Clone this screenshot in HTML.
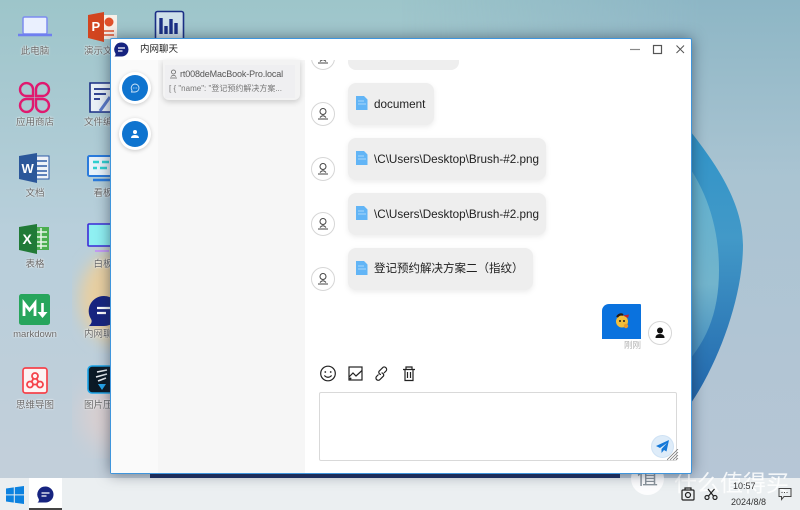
<!DOCTYPE html>
<html lang="zh"><head><meta charset="utf-8"><title>内网聊天</title>
<style>
*{box-sizing:border-box;margin:0;padding:0}
html,body{width:800px;height:510px;overflow:hidden}
body{position:relative;font-family:"Liberation Sans","Noto Sans CJK SC",sans-serif;background:#a9c3cf}
.abs,.lb,.av,.bub,.bub span,.fi{position:absolute}
svg{position:absolute;display:block}
.lb{width:70px;text-align:center;font-size:9.5px;line-height:12px;color:#666;text-shadow:0 0 2px #fff,0 0 1px #fff;white-space:nowrap}
.win{position:absolute;left:110px;top:38px;width:582px;height:436px;background:#fff;border:1px solid #3f95dc;box-shadow:0 0 14px rgba(30,40,60,.55);overflow:hidden;border-radius:2px}
.av{left:311px;width:24px;height:24px;border:1px solid #d6d6d6;border-radius:50%;background:#fff;overflow:hidden}
.bub{left:348px;background:#eeeeee;border-radius:8px;box-shadow:0 2px 6px rgba(0,0,0,.08);height:42px}
.bub span{left:26px;top:13.5px;font-size:11.7px;line-height:15px;color:#222;white-space:nowrap}
.fi{left:8px;top:13px}
.sb{left:119px;width:32px;height:32px;border-radius:50%;background:#fff;box-shadow:0 1px 4px rgba(0,0,0,.2)}
.sb i{position:absolute;left:3px;top:3px;width:26px;height:26px;border-radius:50%;background:#0f74cf}
</style></head><body>
<svg style="left:0;top:0" width="800" height="510" viewBox="0 0 800 510">
<defs>
<linearGradient id="bg" x1="0" y1="0" x2="0" y2="1"><stop offset="0" stop-color="#9dc5ca"/><stop offset=".45" stop-color="#b8cfdb"/><stop offset="1" stop-color="#c4cfda"/></linearGradient>
<linearGradient id="rt" x1="0" y1="0" x2="0" y2="1"><stop offset="0" stop-color="#8db6c5"/><stop offset=".35" stop-color="#aac4d2"/><stop offset="1" stop-color="#b8c6d6"/></linearGradient>
<linearGradient id="fd" x1="0" y1="0" x2="1" y2="0"><stop offset="0" stop-color="#fff" stop-opacity="0"/><stop offset="1" stop-color="#fff"/></linearGradient>
<mask id="m"><rect x="400" width="300" height="510" fill="url(#fd)"/><rect x="700" width="100" height="510" fill="#fff"/></mask>
<linearGradient id="o" x1="0" y1="0" x2="0" y2="1"><stop offset="0" stop-color="#2e93c8"/><stop offset=".4" stop-color="#4299c8"/><stop offset="1" stop-color="#1f62aa"/></linearGradient>
<linearGradient id="i" x1="0" y1="0" x2="0" y2="1"><stop offset="0" stop-color="#5fb0cf"/><stop offset=".6" stop-color="#72b4cc"/><stop offset="1" stop-color="#3d88bd"/></linearGradient>
<filter id="b"><feGaussianBlur stdDeviation="8"/></filter>
<filter id="b2"><feGaussianBlur stdDeviation="12"/></filter>
</defs>
<rect width="800" height="510" fill="url(#bg)"/>
<rect width="800" height="510" fill="url(#rt)" mask="url(#m)"/>
<ellipse cx="118" cy="298" rx="38" ry="46" fill="#e8cfa0" filter="url(#b)"/>
<ellipse cx="120" cy="415" rx="40" ry="36" fill="#e6cfcb" fill-opacity=".65" filter="url(#b2)"/>
<path d="M680 118C705 150 743 195 743 245C743 300 715 375 680 418Z" fill="url(#o)"/>
<path d="M680 155C705 185 719 225 719 270C719 315 705 345 680 370Z" fill="url(#i)"/>
<rect x="150" y="472" width="470" height="7" fill="#1d2f63"/>
</svg>

<!-- desktop icons -->
<svg style="left:17px;top:15px" width="36" height="24" viewBox="0 0 36 24"><rect x="6" y="2" width="24" height="17" rx="1.5" fill="#eaf0fe" stroke="#7d8cf0" stroke-width="1.5"/><path d="M1 20H35" stroke="#6f7ff0" stroke-width="2.5"/></svg>
<div class="lb" style="left:0;top:46px">此电脑</div>
<svg style="left:87px;top:11px" width="31" height="31" viewBox="0 0 31 31"><rect x="13" y="4" width="17" height="24" fill="#f7efe8"/><circle cx="22" cy="11" r="4.5" fill="#e0502a"/><path d="M17 20H27M17 24H27" stroke="#e0502a" stroke-width="1.6"/><path d="M1 4L17 1V31L1 27Z" fill="#d2451f"/><text x="4.5" y="20" font-size="13" font-weight="700" fill="#fff" font-family="Liberation Sans">P</text></svg>
<div class="lb" style="left:68px;top:46px">演示文稿</div>
<svg style="left:154px;top:10px" width="32" height="28" viewBox="0 0 32 28"><rect x="1.5" y="1.5" width="28" height="30" rx="2" fill="#cfe0ea" stroke="#1b2f86" stroke-width="1.6"/><path d="M7 8V24M12 16V24M17 9V24M22 13V24" stroke="#1b2f86" stroke-width="3.4"/></svg>
<svg style="left:18px;top:81px" width="33" height="33" viewBox="0 0 33 33" fill="none" stroke="#e0196f" stroke-width="2.4"><path d="M15 15H8A6.5 6.5 0 1 1 15 8Z"/><path d="M18 15H25A6.5 6.5 0 1 0 18 8Z"/><path d="M15 18H8A6.5 6.5 0 1 0 15 25Z"/><path d="M18 18H25A6.5 6.5 0 1 1 18 25Z"/></svg>
<div class="lb" style="left:0;top:117px">应用商店</div>
<svg style="left:88px;top:81px" width="24" height="33" viewBox="0 0 24 33"><path d="M2 2H24V31H2Z" fill="#e9f0f6" stroke="#1b2f86" stroke-width="1.6"/><path d="M6 8H22M6 13H18M6 18H12" stroke="#1b2f86" stroke-width="1.8"/><path d="M12 30L22 16" stroke="#5a79c8" stroke-width="3"/></svg>
<div class="lb" style="left:68px;top:117px">文件编辑</div>
<svg style="left:18px;top:152px" width="33" height="31" viewBox="0 0 33 31"><rect x="14" y="4" width="17" height="23" fill="#eef2f8" stroke="#2d5aa6"/><path d="M18 9H29M18 14H29M18 19H29M18 23H29" stroke="#2d5aa6" stroke-width="1.5"/><path d="M1 4L19 1V31L1 27Z" fill="#2b579a"/><text x="3.5" y="21" font-size="13" font-weight="700" fill="#fff" font-family="Liberation Sans">W</text></svg>
<div class="lb" style="left:0;top:188px">文档</div>
<svg style="left:87px;top:155px" width="24" height="30" viewBox="0 0 24 30"><rect x="1" y="1" width="30" height="20" rx="1.5" fill="#e8f2fa" stroke="#2a7bdc" stroke-width="2"/><path d="M6 7H12M15 7H22M6 13H10M13 13H20" stroke="#2fd0d0" stroke-width="2.4"/><path d="M6 25H24" stroke="#2a7bdc" stroke-width="2.4"/></svg>
<div class="lb" style="left:68px;top:188px">看板</div>
<svg style="left:18px;top:223px" width="33" height="31" viewBox="0 0 33 31"><rect x="14" y="4" width="17" height="23" fill="#4caf50"/><path d="M19 9H29M19 14H29M19 19H29M19 23H29M23 5V26" stroke="#e9f6ea" stroke-width="1.5"/><path d="M1 4L19 1V31L1 27Z" fill="#217a37"/><text x="4.5" y="21" font-size="14" font-weight="700" fill="#fff" font-family="Liberation Sans">X</text></svg>
<div class="lb" style="left:0;top:259px">表格</div>
<svg style="left:87px;top:223px" width="23" height="30" viewBox="0 0 23 30"><rect x="1" y="1" width="30" height="22" rx="1" fill="#8ff0f2" stroke="#3b2ad8" stroke-width="1.6"/><path d="M8 28H22" stroke="#c29cf2" stroke-width="2"/></svg>
<div class="lb" style="left:68px;top:259px">白板</div>
<svg style="left:19px;top:294px" width="31" height="31" viewBox="0 0 31 31"><rect width="31" height="31" rx="2.5" fill="#27a55c"/><path d="M5 22V9L10.5 16L16 9V22" fill="none" stroke="#fff" stroke-width="2.8"/><path d="M23.5 9V20" stroke="#fff" stroke-width="2.6"/><path d="M18.5 18H28.5L23.5 24Z" fill="#fff"/></svg>
<div class="lb" style="left:0;top:329px">markdown</div>
<svg style="left:88px;top:295px" width="22" height="33" viewBox="0 0 22 33"><path d="M16 1A15 15 0 0 1 16 31H1Q5 27 3 24A15 15 0 0 1 16 1Z" fill="#172480"/><path d="M9 13H22M9 18H18" stroke="#fff" stroke-width="2.2"/></svg>
<div class="lb" style="left:68px;top:329px">内网聊天</div>
<svg style="left:22px;top:367px" width="26" height="27" viewBox="0 0 26 27" fill="none"><rect x="1" y="1" width="24" height="25" rx="2.5" fill="#fdf3f3" stroke="#f5434b" stroke-width="1.7"/><g stroke="#f5434b" stroke-width="1.8"><circle cx="13" cy="9" r="3"/><circle cx="8" cy="17.5" r="3"/><circle cx="18" cy="17.5" r="3"/><path d="M11.5 11.5L9.5 15M14.5 11.5L16.5 15M11 17.5H15"/></g></svg>
<div class="lb" style="left:0;top:400px">思维导图</div>
<svg style="left:87px;top:365px" width="24" height="30" viewBox="0 0 24 30"><rect x="1" y="1" width="30" height="27" rx="4" fill="#0b1a26" stroke="#1aa4e8" stroke-width="1.6"/><path d="M10 7L20 5M9 12L20 9M11 16L19 13" stroke="#e8eef2" stroke-width="1.6"/><path d="M11 19H19L15 25Z" fill="#26a7ee"/></svg>
<div class="lb" style="left:68px;top:400px">图片压缩</div>

<!-- taskbar -->
<div class="abs" style="left:0;top:478px;width:800px;height:32px;background:#ebeff1"></div>
<svg style="left:6px;top:486px" width="18" height="18" viewBox="0 0 18 18" fill="#0c82e0"><path d="M0 2.5L7.8 1.4V8.4H0ZM8.8 1.2L18 0V8.4H8.8ZM0 9.4H7.8V16.6L0 15.5ZM8.8 9.4H18V18L8.8 16.8Z"/></svg>
<div class="abs" style="left:29px;top:478px;width:33px;height:32px;background:#fff"></div>
<div class="abs" style="left:29px;top:508px;width:33px;height:2px;background:#444"></div>
<svg style="left:37px;top:486px" width="17" height="17" viewBox="0 0 17 17"><path d="M8.5 0.5A8 8 0 0 1 8.5 16.5H0.5Q2.5 15 1.7 13A8 8 0 0 1 8.5 0.5Z" fill="#172480"/><path d="M4.5 7H12.5M4.5 10H9.5" stroke="#fff" stroke-width="1.3"/></svg>

<!-- watermark -->
<div class="abs" style="left:631px;top:462px;width:33px;height:33px;border-radius:50%;background:rgba(255,255,255,.88);color:#8b949c;font-size:21px;line-height:31px;text-align:center">值</div>
<div class="abs" style="left:674px;top:468px;font-size:23px;line-height:30px;color:rgba(255,255,255,.85);white-space:nowrap">什么值得买</div>

<!-- window -->
<div class="win"></div>
<div class="abs" style="left:111px;top:60px;width:47px;height:413px;background:#fafafa"></div>
<div class="abs" style="left:158px;top:60px;width:147px;height:413px;background:#f6f6f6"></div>
<svg style="left:114px;top:42px" width="15" height="15" viewBox="0 0 15 15"><path d="M7.5 0.5A7 7 0 0 1 7.5 14.5H0.5Q2 13 1.5 11.5A7 7 0 0 1 7.5 0.5Z" fill="#172480"/><path d="M4 6H11M4 9H8.5" stroke="#fff" stroke-width="1.2"/></svg>
<div class="abs" style="left:140px;top:43px;font-size:9.5px;line-height:13px;color:#222">内网聊天</div>
<svg style="left:628px;top:43px" width="60" height="12" viewBox="0 0 60 12" fill="none" stroke="#555"><path d="M2 6.5H12" stroke="#888" stroke-width="1.2"/><rect x="25.5" y="2.5" width="8" height="8" stroke-width="1.2"/><path d="M48.5 2.5L56 10M56 2.5L48.5 10" stroke-width="1"/></svg>

<!-- sidebar buttons -->
<div class="abs sb" style="top:72px"><i></i></div>
<svg style="left:130px;top:83px" width="10" height="10" viewBox="0 0 10 10" fill="none"><path d="M5 1A4 4 0 0 1 5 9H1.5L2 7.3A4 4 0 0 1 5 1Z" stroke="#cfe5f8" stroke-width=".9"/><circle cx="3.3" cy="5" r=".5" fill="#cfe5f8"/><circle cx="5" cy="5" r=".5" fill="#cfe5f8"/><circle cx="6.7" cy="5" r=".5" fill="#cfe5f8"/></svg>
<div class="abs sb" style="top:118px"><i></i></div>
<svg style="left:130px;top:129px" width="10" height="10" viewBox="0 0 10 10" fill="#fff"><circle cx="5" cy="3" r="2"/><path d="M1 9Q1 6 5 6Q9 6 9 9Z"/></svg>

<!-- list -->
<div class="abs" style="left:163px;top:60px;width:137px;height:40px;background:#f3f3f3;border-radius:0 0 6px 6px;box-shadow:0 2px 6px rgba(0,0,0,.18)"></div>
<div class="abs" style="left:165px;top:65px;width:130px;height:33px;background:#efeff1"></div>
<svg style="left:169px;top:69px" width="9" height="10" viewBox="0 0 9 10" fill="none" stroke="#666" stroke-width=".8"><circle cx="4.5" cy="3" r="2"/><path d="M1 9H8M2 7.5Q4.5 5 7 7.5"/></svg>
<div class="abs" style="left:180px;top:68px;font-size:9px;letter-spacing:-.13px;line-height:13px;color:#555;white-space:nowrap">rt008deMacBook-Pro.local</div>
<div class="abs" style="left:169px;top:83px;font-size:8px;line-height:11px;color:#777;white-space:nowrap">[ { "name": "登记预约解决方案...</div>

<!-- messages -->
<div class="abs" style="left:306px;top:60px;width:380px;height:11px;overflow:hidden">
 <div class="av" style="left:5px;top:-14px;width:24px;height:24px"><svg style="left:5px;top:4px" width="12" height="14" viewBox="0 0 12 14" fill="none" stroke="#444"><circle cx="6" cy="4.5" r="3"/><path d="M1 12H11M3 10.5Q6 7 9 10.5"/></svg></div>
 <div class="abs" style="left:42px;top:-30px;width:111px;height:40px;background:#eee;border-radius:8px"></div>
</div>
<div class="av" style="top:102px"><svg style="left:5px;top:4px" width="12" height="14" viewBox="0 0 12 14" fill="none" stroke="#444"><circle cx="6" cy="4.5" r="3"/><path d="M1 12H11M3 10.5Q6 7 9 10.5"/></svg></div>
<div class="av" style="top:157px"><svg style="left:5px;top:4px" width="12" height="14" viewBox="0 0 12 14" fill="none" stroke="#444"><circle cx="6" cy="4.5" r="3"/><path d="M1 12H11M3 10.5Q6 7 9 10.5"/></svg></div>
<div class="av" style="top:212px"><svg style="left:5px;top:4px" width="12" height="14" viewBox="0 0 12 14" fill="none" stroke="#444"><circle cx="6" cy="4.5" r="3"/><path d="M1 12H11M3 10.5Q6 7 9 10.5"/></svg></div>
<div class="av" style="top:267px"><svg style="left:5px;top:4px" width="12" height="14" viewBox="0 0 12 14" fill="none" stroke="#444"><circle cx="6" cy="4.5" r="3"/><path d="M1 12H11M3 10.5Q6 7 9 10.5"/></svg></div>

<div class="bub" style="top:83px;width:86px"><svg class="fi" width="12" height="14" viewBox="0 0 12 14"><path d="M0 0H8L11.5 3.5V14H0Z" fill="#62b5f6"/><path d="M2 5H8M2 8H10" stroke="#a8d6fa"/></svg><span>document</span></div>
<div class="bub" style="top:138px;width:198px"><svg class="fi" width="12" height="14" viewBox="0 0 12 14"><path d="M0 0H8L11.5 3.5V14H0Z" fill="#62b5f6"/><path d="M2 5H8M2 8H10" stroke="#a8d6fa"/></svg><span>\C\Users\Desktop\Brush-#2.png</span></div>
<div class="bub" style="top:193px;width:198px"><svg class="fi" width="12" height="14" viewBox="0 0 12 14"><path d="M0 0H8L11.5 3.5V14H0Z" fill="#62b5f6"/><path d="M2 5H8M2 8H10" stroke="#a8d6fa"/></svg><span>\C\Users\Desktop\Brush-#2.png</span></div>
<div class="bub" style="top:248px;width:185px"><svg class="fi" width="12" height="14" viewBox="0 0 12 14"><path d="M0 0H8L11.5 3.5V14H0Z" fill="#62b5f6"/><path d="M2 5H8M2 8H10" stroke="#a8d6fa"/></svg><span style="font-size:11.5px">登记预约解决方案二（指纹）</span></div>

<!-- self message -->
<div class="abs" style="left:602px;top:304px;width:39px;height:35px;background:#0a72de;border-radius:7px 1px 0 0"></div>
<svg style="left:614px;top:312px" width="17" height="17" viewBox="0 0 17 17"><circle cx="8" cy="9.5" r="6" fill="#f3bf3a"/><path d="M3 5Q6 1 9 3" stroke="#2a1a10" stroke-width="2.2" fill="none"/><path d="M9 3.5L15 2.5L14 6Z" fill="#c4242a"/><circle cx="6" cy="9" r="1" fill="#222"/><circle cx="10" cy="9" r="1" fill="#222"/><circle cx="12" cy="14" r="2.2" fill="#ee9b2a"/></svg>
<div class="abs" style="left:624px;top:340px;font-size:8.5px;line-height:11px;color:#b5b5b5">刚刚</div>
<div class="av" style="left:648px;top:321px"><svg style="left:5px;top:5px" width="12" height="12" viewBox="0 0 12 12" fill="#111"><circle cx="6" cy="3.5" r="3"/><path d="M1.5 11Q1.5 7 6 7Q10.5 7 10.5 11Z"/></svg></div>

<!-- toolbar -->
<svg style="left:319px;top:364px" width="100" height="19" viewBox="0 0 100 19" fill="none" stroke="#222" stroke-width="1.2">
 <circle cx="9" cy="9.5" r="7.3"/><circle cx="6.3" cy="8" r=".9" fill="#222" stroke="none"/><circle cx="11.7" cy="8" r=".9" fill="#222" stroke="none"/><path d="M5.3 11.5Q9 15 12.7 11.5"/>
 <rect x="30" y="3" width="13" height="13"/><path d="M30 13L34 9L37 12L43 6.5"/><circle cx="31.5" cy="14.5" r="1" fill="#222" stroke="none"/>
 <path d="M59.5 10.5L57.5 12.5A2.3 2.3 0 0 0 61 15.5L64.5 12A2.3 2.3 0 0 0 62.5 8.8M65 9L67 7A2.3 2.3 0 0 0 63.5 3.8L60 7.3A2.3 2.3 0 0 0 62 10.5"/>
 <path d="M84 5.5H96M86 5.5V16.5H94V5.5M87 5.5V3H93V5.5M88.5 8V14M91.5 8V14"/>
</svg>

<!-- input -->
<div class="abs" style="left:319px;top:392px;width:358px;height:69px;background:#fff;border:1px solid #d9d9d9;border-radius:2px"></div>
<div class="abs" style="left:651px;top:435px;width:23px;height:23px;border-radius:50%;background:#deecf9;border:1px solid #cfe2f4"></div>
<svg style="left:655px;top:439px" width="15" height="15" viewBox="0 0 15 15"><path d="M14 1L1 7L5 9L12 4L6.5 10V14L9 11L11.5 12.5Z" fill="#1478d8"/></svg>
<svg style="left:667px;top:449px" width="12" height="12" viewBox="0 0 12 12" stroke="#777" stroke-width=".8"><path d="M0 11L11 0M3 11L11 3M6 11L11 6M9 11L11 9"/></svg>

<!-- tray -->
<svg style="left:681px;top:487px" width="14" height="14" viewBox="0 0 14 14" fill="none" stroke="#222" stroke-width="1.2"><rect x="1" y="3" width="12" height="10" rx="1"/><circle cx="7" cy="8" r="2.5"/><path d="M4 3V1H10V3"/></svg>
<svg style="left:704px;top:488px" width="15" height="12" viewBox="0 0 15 12" fill="none" stroke="#222" stroke-width="1.2"><circle cx="3" cy="9.5" r="2"/><circle cx="11" cy="9.5" r="2"/><path d="M4.5 8L10.5 1M9.5 8L4 1"/></svg>
<div class="abs" style="left:733px;top:480px;font-size:9px;line-height:12px;color:#333">10:57</div>
<div class="abs" style="left:731px;top:496px;font-size:9px;line-height:12px;color:#333">2024/8/8</div>
<svg style="left:778px;top:487px" width="14" height="14" viewBox="0 0 14 14" fill="none" stroke="#444"><path d="M1 1.5H13V9.5H6L3.5 12.5V9.5H1Z"/><path d="M3.5 5.5H10.5" stroke-dasharray="1 1.5"/></svg>
</body></html>
